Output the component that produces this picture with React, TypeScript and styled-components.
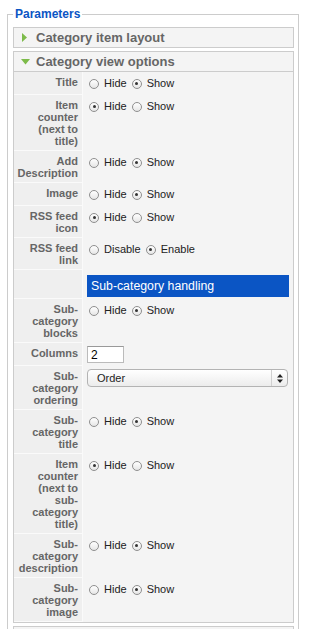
import React from "react";
import styled, { createGlobalStyle } from "styled-components";

type Field =
  | { label: string; kind: "radio"; options: [string, string]; checked: 0 | 1 }
  | { label: string; kind: "section"; title: string }
  | { label: string; kind: "text"; value: string }
  | { label: string; kind: "select"; value: string };

const hs: [string, string] = ["Hide", "Show"];

const fields: Field[] = [
  { label: "Title", kind: "radio", options: hs, checked: 1 },
  { label: "Item counter (next to title)", kind: "radio", options: hs, checked: 0 },
  { label: "Add Description", kind: "radio", options: hs, checked: 1 },
  { label: "Image", kind: "radio", options: hs, checked: 1 },
  { label: "RSS feed icon", kind: "radio", options: hs, checked: 0 },
  { label: "RSS feed link", kind: "radio", options: ["Disable", "Enable"], checked: 1 },
  { label: "", kind: "section", title: "Sub-category handling" },
  { label: "Sub-category blocks", kind: "radio", options: hs, checked: 1 },
  { label: "Columns", kind: "text", value: "2" },
  { label: "Sub-category ordering", kind: "select", value: "Order" },
  { label: "Sub-category title", kind: "radio", options: hs, checked: 1 },
  { label: "Item counter (next to sub-category title)", kind: "radio", options: hs, checked: 0 },
  { label: "Sub-category description", kind: "radio", options: hs, checked: 1 },
  { label: "Sub-category image", kind: "radio", options: hs, checked: 1 },
];

const Arrow = ({ open }: { open?: boolean }) => (
  <ArrowBox>
    {open ? (
      <svg width="10" height="6" viewBox="0 0 10 6">
        <path d="M0 0 L9 0 L4.5 5.5 Z" fill="#7dbb4a" />
      </svg>
    ) : (
      <svg width="10" height="9" viewBox="0 0 10 9">
        <path d="M1 0 L6 4.5 L1 9 Z" fill="#7dbb4a" />
      </svg>
    )}
  </ArrowBox>
);

const Choice = ({ options, checked }: { options: [string, string]; checked: number }) => (
  <Choices>
    {options.map((o, i) => (
      <Option key={o}>
        <RadioDot $checked={i === checked} />
        {o}
      </Option>
    ))}
  </Choices>
);

const renderValue = (f: Field) => {
  switch (f.kind) {
    case "radio":
      return (
        <Value>
          <Choice options={f.options} checked={f.checked} />
        </Value>
      );
    case "section":
      return (
        <Value $pad="5px 4px 2px 4px">
          <SectionBar>{f.title}</SectionBar>
        </Value>
      );
    case "text":
      return (
        <Value $pad="3px 5px 3px 4px">
          <TextInput defaultValue={f.value} />
        </Value>
      );
    case "select":
      return (
        <Value $pad="3px 5px 2px 4px">
          <SelectBox>
            <span>{f.value}</span>
            <SelectArrows>
              <svg width="6" height="9" viewBox="0 0 6 9">
                <path d="M0 3.5 L3 0 L6 3.5 Z M0 5.5 L3 9 L6 5.5 Z" fill="#222" />
              </svg>
            </SelectArrows>
          </SelectBox>
        </Value>
      );
  }
};

const App = () => {
  return (
    <>
      <GlobalStyle />
      <Frame>
        <Legend>Parameters</Legend>
        <Panel>
          <PanelHeader>
            <Arrow />
            Category item layout
          </PanelHeader>
        </Panel>
        <Panel>
          <PanelHeader $open>
            <Arrow open />
            Category view options
          </PanelHeader>
          {fields.map((f, i) => (
            <Row key={i}>
              <Key>{f.label}</Key>
              {renderValue(f)}
            </Row>
          ))}
        </Panel>
        <Panel>
          <PanelHeader>
            <Arrow />
            Category blog layout
          </PanelHeader>
        </Panel>
      </Frame>
    </>
  );
};

export default App;

const GlobalStyle = createGlobalStyle`
  body {
    margin: 0;
    background: #fff;
    font-family: "Liberation Sans", Arial, sans-serif;
  }
`;

const Frame = styled.fieldset`
  margin: 6px 11px 0 7px;
  padding: 5px 4px 0 5px;
  border: 1px solid #ccc;
  min-width: 0;
`;

const Legend = styled.legend`
  padding: 0 2px;
  font: bold 12px/16px "Liberation Sans", Arial, sans-serif;
  color: #0b55c4;
`;

const Panel = styled.div`
  border: 1px solid #ccc;
  background: #f4f4f4;
  margin-bottom: 3px;
`;

const PanelHeader = styled.div<{ $open?: boolean }>`
  display: flex;
  align-items: center;
  gap: 5px;
  height: 19px;
  padding-left: 7px;
  font: bold 13px/19px "Liberation Sans", Arial, sans-serif;
  color: #666;
  border-bottom: ${(p) => (p.$open ? "1px solid #ccc" : "none")};
`;

const ArrowBox = styled.span`
  display: flex;
  align-items: center;
  width: 10px;
  height: 10px;
`;

const Row = styled.div`
  display: flex;
  align-items: stretch;
`;

const Key = styled.div`
  flex: none;
  width: 62px;
  padding: 4px 4px 3px 2px;
  text-align: right;
  font: bold 11px/12px "Liberation Sans", Arial, sans-serif;
  color: #666;
  background: #efefef;
  border-right: 1px solid #fafafa;
  border-bottom: 1px solid #fafafa;
`;

const Value = styled.div<{ $pad?: string }>`
  flex: 1;
  min-width: 0;
  padding: ${(p) => p.$pad ?? "5px 5px 5px 6px"};
`;

const Choices = styled.div`
  display: flex;
  align-items: center;
  height: 13px;
`;

const Option = styled.label`
  display: inline-flex;
  align-items: center;
  margin-right: 5px;
  font: 11px/13px "Liberation Sans", Arial, sans-serif;
  color: #222;
`;

const RadioDot = styled.span<{ $checked?: boolean }>`
  position: relative;
  box-sizing: border-box;
  width: 10px;
  height: 10px;
  margin-right: 5px;
  border-radius: 50%;
  border: 1px solid #8f8f8f;
  background: linear-gradient(#ffffff, #e6e6e6);
  &::after {
    content: "";
    display: ${(p) => (p.$checked ? "block" : "none")};
    position: absolute;
    left: 2.5px;
    top: 2.5px;
    width: 3px;
    height: 3px;
    border-radius: 50%;
    background: #333;
  }
`;

const SectionBar = styled.div`
  height: 22px;
  padding-left: 4px;
  background: #0b55c4;
  color: #fff;
  font: 12.3px/22px "Liberation Sans", Arial, sans-serif;
`;

const TextInput = styled.input`
  box-sizing: border-box;
  display: block;
  width: 37px;
  height: 17px;
  margin: 0;
  padding: 0 3px;
  border: 1px solid #bbb;
  border-top-color: #999;
  background: #fff;
  font: 12px "Liberation Sans", Arial, sans-serif;
  color: #000;
  outline: none;
`;

const SelectBox = styled.div`
  box-sizing: border-box;
  display: flex;
  align-items: center;
  justify-content: space-between;
  height: 18px;
  padding-left: 9px;
  border: 1px solid #b3b3b3;
  border-radius: 4px;
  background: linear-gradient(#ffffff, #ececec);
  font: 11px/16px "Liberation Sans", Arial, sans-serif;
  color: #222;
`;

const SelectArrows = styled.span`
  display: flex;
  align-items: center;
  justify-content: center;
  width: 15px;
  height: 100%;
  border-left: 1px solid #d0d0d0;
`;
